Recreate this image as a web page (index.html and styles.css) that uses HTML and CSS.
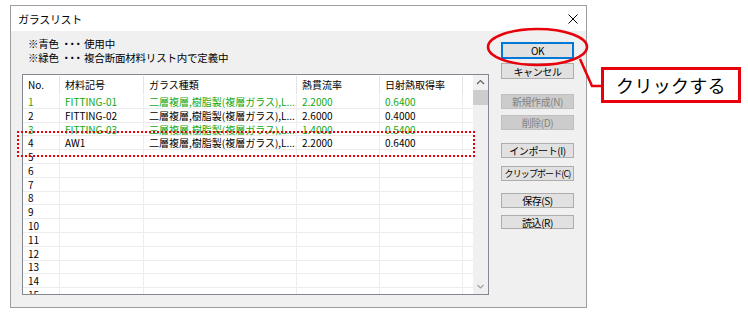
FILE: index.html
```html
<!DOCTYPE html>
<html lang="ja">
<head>
<meta charset="utf-8">
<link rel="stylesheet" href="styles.css">
</head>
<body>
<div class="dialog">
  <div class="titlebar">
    <span class="title">ガラスリスト</span>
    <svg class="close" width="10" height="10" viewBox="0 0 10 10"><path d="M0.5 0.5L9.5 9.5M9.5 0.5L0.5 9.5" stroke="#000" stroke-width="1"/></svg>
  </div>
  <div class="body">
    <div class="left">
      <div class="notes">
        <div class="note">※青色 <span class="dots">・・・</span>使用中</div>
        <div class="note">※緑色 <span class="dots">・・・</span>複合断面材料リスト内で定義中</div>
      </div>
      <div class="listbox">
        <div class="grid">
          <div class="row head"><div class="c c1">No.</div><div class="c c2">材料記号</div><div class="c c3">ガラス種類</div><div class="c c4">熱貫流率</div><div class="c c5">日射熱取得率</div><div class="c c6"></div></div>
          <div class="row green"><div class="c c1">1</div><div class="c c2">FITTING-01</div><div class="c c3">二層複層,樹脂製(複層ガラス),L...</div><div class="c c4">2.2000</div><div class="c c5">0.6400</div><div class="c c6"></div></div>
          <div class="row"><div class="c c1">2</div><div class="c c2">FITTING-02</div><div class="c c3">二層複層,樹脂製(複層ガラス),L...</div><div class="c c4">2.6000</div><div class="c c5">0.4000</div><div class="c c6"></div></div>
          <div class="row green"><div class="c c1">3</div><div class="c c2">FITTING-03</div><div class="c c3">三層複層,樹脂製(複層ガラス),L...</div><div class="c c4">1.4000</div><div class="c c5">0.5400</div><div class="c c6"></div></div>
          <div class="row"><div class="c c1">4</div><div class="c c2">AW1</div><div class="c c3">二層複層,樹脂製(複層ガラス),L...</div><div class="c c4">2.2000</div><div class="c c5">0.6400</div><div class="c c6"></div></div>
          <div class="row"><div class="c c1">5</div><div class="c c2"></div><div class="c c3"></div><div class="c c4"></div><div class="c c5"></div><div class="c c6"></div></div>
          <div class="row"><div class="c c1">6</div><div class="c c2"></div><div class="c c3"></div><div class="c c4"></div><div class="c c5"></div><div class="c c6"></div></div>
          <div class="row"><div class="c c1">7</div><div class="c c2"></div><div class="c c3"></div><div class="c c4"></div><div class="c c5"></div><div class="c c6"></div></div>
          <div class="row"><div class="c c1">8</div><div class="c c2"></div><div class="c c3"></div><div class="c c4"></div><div class="c c5"></div><div class="c c6"></div></div>
          <div class="row"><div class="c c1">9</div><div class="c c2"></div><div class="c c3"></div><div class="c c4"></div><div class="c c5"></div><div class="c c6"></div></div>
          <div class="row"><div class="c c1">10</div><div class="c c2"></div><div class="c c3"></div><div class="c c4"></div><div class="c c5"></div><div class="c c6"></div></div>
          <div class="row"><div class="c c1">11</div><div class="c c2"></div><div class="c c3"></div><div class="c c4"></div><div class="c c5"></div><div class="c c6"></div></div>
          <div class="row"><div class="c c1">12</div><div class="c c2"></div><div class="c c3"></div><div class="c c4"></div><div class="c c5"></div><div class="c c6"></div></div>
          <div class="row"><div class="c c1">13</div><div class="c c2"></div><div class="c c3"></div><div class="c c4"></div><div class="c c5"></div><div class="c c6"></div></div>
          <div class="row"><div class="c c1">14</div><div class="c c2"></div><div class="c c3"></div><div class="c c4"></div><div class="c c5"></div><div class="c c6"></div></div>
          <div class="row"><div class="c c1">15</div><div class="c c2"></div><div class="c c3"></div><div class="c c4"></div><div class="c c5"></div><div class="c c6"></div></div>
        </div>
        <div class="scrollbar">
          <svg class="arrow" width="15" height="15" viewBox="0 0 15 15"><path d="M4 9L7.5 5.5L11 9" fill="none" stroke="#606060" stroke-width="1.2"/></svg>
          <div class="thumb"></div>
          <div class="track"></div>
          <svg class="arrow" width="15" height="15" viewBox="0 0 15 15"><path d="M4.5 6L7.5 9L10.5 6" fill="none" stroke="#a0a0a0" stroke-width="1.2"/></svg>
        </div>
      </div>
    </div>
    <div class="buttons">
      <div class="btn ok">OK</div>
      <div class="btn cancel">キャンセル</div>
      <div class="btn dis new">新規作成(N)</div>
      <div class="btn dis del">削除(D)</div>
      <div class="btn imp">インポート(I)</div>
      <div class="btn clip">クリップボード(C)</div>
      <div class="btn save">保存(S)</div>
      <div class="btn load">読込(R)</div>
    </div>
  </div>
</div>

<svg class="annot" width="748" height="320" viewBox="0 0 748 320">
  <ellipse cx="537.5" cy="47" rx="49.5" ry="18" fill="none" stroke="#e8000b" stroke-width="2.5"/>
  <path d="M580 59L592 86L603 86" fill="none" stroke="#e8000b" stroke-width="2.5"/>
</svg>
<div class="callout">クリックする</div>
<div class="dotted"></div>
</body>
</html>
```

FILE: styles.css
```css
html, body {
  margin: 0;
  padding: 0;
  background: #ffffff;
}
body {
  position: relative;
  width: 748px;
  height: 320px;
  overflow: hidden;
  font-family: "Noto Sans CJK JP", "Noto Sans", sans-serif;
  color: #000;
}
.dialog {
  box-sizing: border-box;
  margin: 5px 0 0 10px;
  width: 577px;
  height: 303px;
  border: 1px solid #9d9d9d;
  display: flex;
  flex-direction: column;
}
.titlebar {
  height: 25px;
  background: #fff;
  display: flex;
  align-items: center;
  justify-content: space-between;
  padding: 0 8px 0 7px;
}
.title {
  font-size: 11px;
  line-height: 14px;
  letter-spacing: -0.3px;
}
.close {
  display: block;
}
.body {
  flex: 1;
  background: #f0f0f0;
  display: flex;
  padding-left: 11px;
}
.left {
  width: 467px;
  display: flex;
  flex-direction: column;
}
.notes {
  padding: 6px 0 0 6px;
  font-size: 10.5px;
  letter-spacing: -0.2px;
}
.note {
  height: 14px;
  line-height: 14px;
  white-space: nowrap;
}
.dots {
  letter-spacing: -4.5px;
  margin-right: 5px;
}
.listbox {
  box-sizing: border-box;
  margin-top: 9px;
  height: 221px;
  border: 1px solid #828790;
  background: #fff;
  display: flex;
}
.grid {
  width: 450px;
  overflow: hidden;
  font-size: 10px;
}
.row {
  display: flex;
  height: 13.8px;
  box-sizing: border-box;
  border-bottom: 1px solid #ececec;
}
.row.head {
  height: 20px;
  border-bottom: none;
}
.c {
  box-sizing: border-box;
  border-right: 1px solid #ececec;
  padding-left: 5px;
  white-space: nowrap;
  overflow: hidden;
  line-height: 13px;
  display: flex;
  align-items: center;
}
.head .c {
  border-right: 1px solid #e3e3e3;
  line-height: 18px;
  margin-top: 1px;
  margin-bottom: 1px;
}
.c1 { width: 37px; }
.c2 { width: 84px; }
.c3 { width: 153px; }
.c4 { width: 83px; }
.c5 { width: 83px; }
.c6 { width: 10px; border-right: none; }
.head .c6 { border-right: none; }
.green { color: #12a812; }
.scrollbar {
  width: 15px;
  background: #f0f0f0;
  display: flex;
  flex-direction: column;
}
.arrow { display: block; }
.thumb {
  height: 15px;
  background: #cdcdcd;
}
.track { flex: 1; }
.buttons {
  margin-left: 12px;
  padding-top: 11px;
  width: 73px;
  display: flex;
  flex-direction: column;
}
.btn {
  box-sizing: border-box;
  height: 15px;
  background: #e1e1e1;
  border: 1px solid #adadad;
  font-size: 10px;
  display: flex;
  align-items: center;
  justify-content: center;
  letter-spacing: -0.4px;
  white-space: nowrap;
}
.btn.ok {
  height: 17px;
  border: 1px solid #0078d7;
  box-shadow: inset 0 0 0 1px #0078d7;
}
.btn.cancel { margin-top: 4px; height: 16px; }
.btn.dis {
  background: #cccccc;
  border-color: #bfbfbf;
  color: #838383;
}
.btn.new { margin-top: 15px; }
.btn.del { margin-top: 6px; }
.btn.imp { margin-top: 13px; }
.btn.clip {
  margin-top: 8px;
  font-size: 9px;
  letter-spacing: -0.9px;
}
.btn.save { margin-top: 12px; }
.btn.load { margin-top: 7px; height: 14px; }

.annot {
  position: absolute;
  left: 0;
  top: 0;
  pointer-events: none;
}
.callout {
  position: absolute;
  left: 601px;
  top: 67px;
  width: 140px;
  height: 36px;
  box-sizing: border-box;
  border: 3px solid #e8000b;
  background: #fff;
  font-size: 18px;
  display: flex;
  align-items: center;
  justify-content: center;
  letter-spacing: 0.3px;
}
.dotted {
  position: absolute;
  left: 17px;
  top: 131px;
  width: 458px;
  height: 26px;
  box-sizing: border-box;
  border: 2px dotted #e8000b;
}
```
